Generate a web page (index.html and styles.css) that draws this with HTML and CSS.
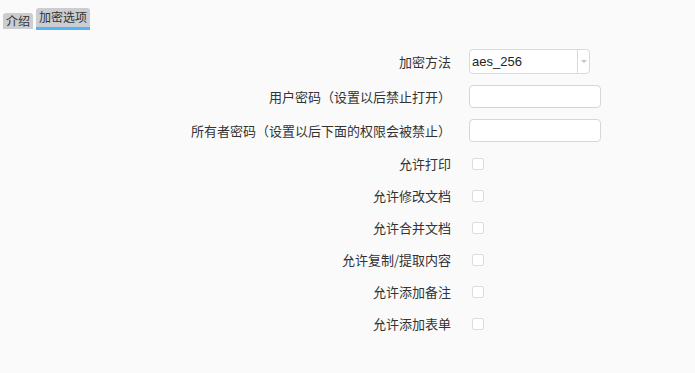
FILE: index.html
```html
<!DOCTYPE html>
<html lang="zh">
<head>
<meta charset="utf-8">
<title>加密选项</title>
<link rel="stylesheet" href="styles.css">
</head>
<body>
<div class="tabs">
  <div class="tab">介绍</div>
  <div class="tab tab-active">加密选项</div>
</div>
<div class="form">
  <label class="label">加密方法</label>
  <div class="control">
    <div class="select">
      <span class="select-value">aes_256</span>
      <span class="select-arrow"><span class="caret"></span></span>
    </div>
  </div>

  <label class="label">用户密码（设置以后禁止打开）</label>
  <div class="control"><input class="text" type="password"></div>

  <label class="label">所有者密码（设置以后下面的权限会被禁止）</label>
  <div class="control"><input class="text" type="password"></div>

  <label class="label">允许打印</label>
  <div class="control"><input class="check" type="checkbox"></div>

  <label class="label">允许修改文档</label>
  <div class="control"><input class="check" type="checkbox"></div>

  <label class="label">允许合并文档</label>
  <div class="control"><input class="check" type="checkbox"></div>

  <label class="label">允许复制/提取内容</label>
  <div class="control"><input class="check" type="checkbox"></div>

  <label class="label">允许添加备注</label>
  <div class="control"><input class="check" type="checkbox"></div>

  <label class="label">允许添加表单</label>
  <div class="control"><input class="check" type="checkbox"></div>
</div>
</body>
</html>
```
FILE: styles.css
```css
html, body {
  margin: 0;
  padding: 0;
  background: #fafafa;
  color: #333;
  font-family: "Noto Sans CJK SC", "Liberation Sans", sans-serif;
}

.tabs {
  display: flex;
  align-items: flex-end;
  gap: 3px;
  padding: 7px 0 0 3px;
  height: 22px;
}

.tab {
  background: #cbcdd1;
  border-radius: 3px 3px 0 0;
  font-size: 12px;
  line-height: 16px;
  height: 16px;
  padding: 0 3px;
  color: #333;
}

.tab-active {
  height: 19px;
  line-height: 18px;
  border-bottom: 3px solid #52b4f5;
  margin-bottom: -1px;
}

.form {
  display: grid;
  grid-template-columns: 451px auto;
  column-gap: 18px;
  row-gap: 11px;
  grid-auto-rows: 21px;
  grid-template-rows: 25px 23px 23px;
  margin-top: 20px;
}

.label {
  font-size: 13px;
  text-align: right;
  align-self: center;
  white-space: nowrap;
  line-height: 18px;
  color: #333;
}

.control {
  display: flex;
  align-items: center;
}

.select {
  box-sizing: border-box;
  width: 121px;
  height: 25px;
  border: 1px solid #dadada;
  border-radius: 4px;
  background: #fff;
  display: flex;
  align-items: stretch;
}

.select-value {
  flex: 1;
  font-family: "Liberation Sans", sans-serif;
  font-size: 13px;
  line-height: 23px;
  padding-left: 2px;
  color: #222;
}

.select-arrow {
  width: 11px;
  border-left: 1px solid #dadada;
  display: flex;
  align-items: center;
  justify-content: center;
}

.caret {
  width: 0;
  height: 0;
  border-left: 3px solid transparent;
  border-right: 3px solid transparent;
  border-top: 3px solid #c4c4c4;
}

.text {
  box-sizing: border-box;
  width: 132px;
  height: 23px;
  margin: 0;
  border: 1px solid #d6d6d6;
  border-radius: 4px;
  background: #fff;
  outline: none;
}

.check {
  appearance: none;
  -webkit-appearance: none;
  box-sizing: border-box;
  width: 12px;
  height: 12px;
  margin: 0 0 0 3px;
  border: 1px solid #dcdcdc;
  border-radius: 2px;
  background: #fff;
}
```
